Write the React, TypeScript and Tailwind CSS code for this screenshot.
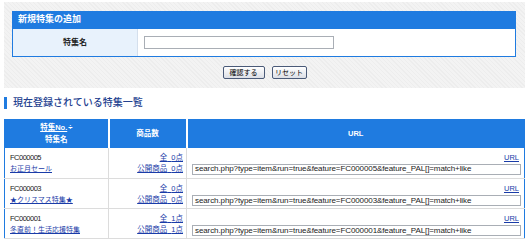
import React from "react";

const rows = [
  { no: "FC000005", name: "お正月セール", all: "0点", pub: "0点" },
  { no: "FC000003", name: "★クリスマス特集★", all: "0点", pub: "0点" },
  { no: "FC000001", name: "冬直前！生活応援特集", all: "1点", pub: "1点" },
];

function Btn({ children, w }: { children: React.ReactNode; w: string }) {
  return (
    <button
      className={`${w} h-[13px] rounded-[2px] border border-[#4a5a78] bg-[linear-gradient(#ffffff,#dcdfe6)] text-[7px] leading-none text-black flex items-center justify-center`}
    >
      {children}
    </button>
  );
}

export default function App() {
  return (
    <div className="w-[529px] h-[244px] bg-white overflow-hidden font-['Liberation_Sans','Noto_Sans_CJK_JP',sans-serif] text-[#222]">
      <div className="ml-[4px] mt-[2px] w-[521px] h-[86px] bg-[repeating-linear-gradient(45deg,#ededed_0px,#ededed_1px,#f3f3f3_1px,#f3f3f3_3px)] pt-[9px] pl-[8px]">
        <div className="w-[504px] border border-[#1f7be0] bg-white">
          <div className="h-[16px] bg-[#1f7be0] text-white font-bold text-[9px] pl-[5px] flex items-center">
            新規特集の追加
          </div>
          <div className="flex h-[28px] border-t border-[#1f7be0]">
            <div className="w-[125px] bg-[#e8f2fc] border-r border-[#d4dfec] flex items-center justify-center font-bold text-[8px]">
              特集名
            </div>
            <div className="flex-1 flex items-center pl-[6px]">
              <input className="w-[190px] h-[13px] border border-[#a9aeb5] bg-white outline-none" />
            </div>
          </div>
        </div>
        <div className="flex justify-center gap-[7px] mt-[9px] pr-[8px]">
          <Btn w="w-[42px]">確認する</Btn>
          <Btn w="w-[35px]">リセット</Btn>
        </div>
      </div>

      <div className="flex items-center h-[12px] mt-[9px] ml-[4px]">
        <div className="w-[3px] h-[12px] bg-[#1f7be0]" />
        <div className="ml-[6px] text-[10px] font-medium text-[#23418f] leading-none">現在登録されている特集一覧</div>
      </div>

      <table className="mt-[10px] ml-[4px] w-[521px] border-collapse border border-[#1f7be0] table-fixed text-[8px]">
        <colgroup>
          <col className="w-[104px]" />
          <col className="w-[78px]" />
          <col />
        </colgroup>
        <thead>
          <tr className="h-[28px] bg-[#1f7be0] text-white font-bold text-[7.5px]">
            <th className="border-r-2 border-white text-center font-bold leading-[12px]">
              <span className="underline">特集No.</span>
              <span className="ml-[1px]">÷</span>
              <br />
              特集名
            </th>
            <th className="border-r-2 border-white text-center font-bold">商品数</th>
            <th className="text-center font-bold">URL</th>
          </tr>
        </thead>
        <tbody>
          {rows.map((r, i) => (
            <tr key={r.no} className={`${i === 0 ? "h-[31px]" : "h-[30px]"} border-b border-[#dcdcdc]`}>
              <td className="pl-[5px] align-top pt-[4px] border-r border-[#dcdcdc]">
                <div className="leading-[11px] text-[7.5px] tracking-[-0.5px]">{r.no}</div>
                <div className="leading-[11px] text-[7px] text-[#1a3ca8] underline">{r.name}</div>
              </td>
              <td className="pr-[3px] align-top pt-[4px] text-right border-r border-[#dcdcdc] text-[7.5px]">
                <div className="leading-[11px] text-[#1a3ca8] underline">全{"\u00a0\u00a0"}{r.all}</div>
                <div className="leading-[11px] text-[#1a3ca8] underline">公開商品{"\u00a0\u00a0"}{r.pub}</div>
              </td>
              <td className="pl-[5px] pr-[3px] align-top pt-[5px]">
                <div className="text-right leading-[10px] text-[7.5px] text-[#1a3ca8] underline pr-[2px]">URL</div>
                <div className="mt-[1px] h-[11px] border border-[#a9aeb5] flex items-center pl-[2px] text-[8px] tracking-[-0.1px] whitespace-nowrap overflow-hidden">
                  search.php?type=item&amp;run=true&amp;feature={r.no}&amp;feature_PAL[]=match+like
                </div>
              </td>
            </tr>
          ))}
        </tbody>
      </table>
    </div>
  );
}
